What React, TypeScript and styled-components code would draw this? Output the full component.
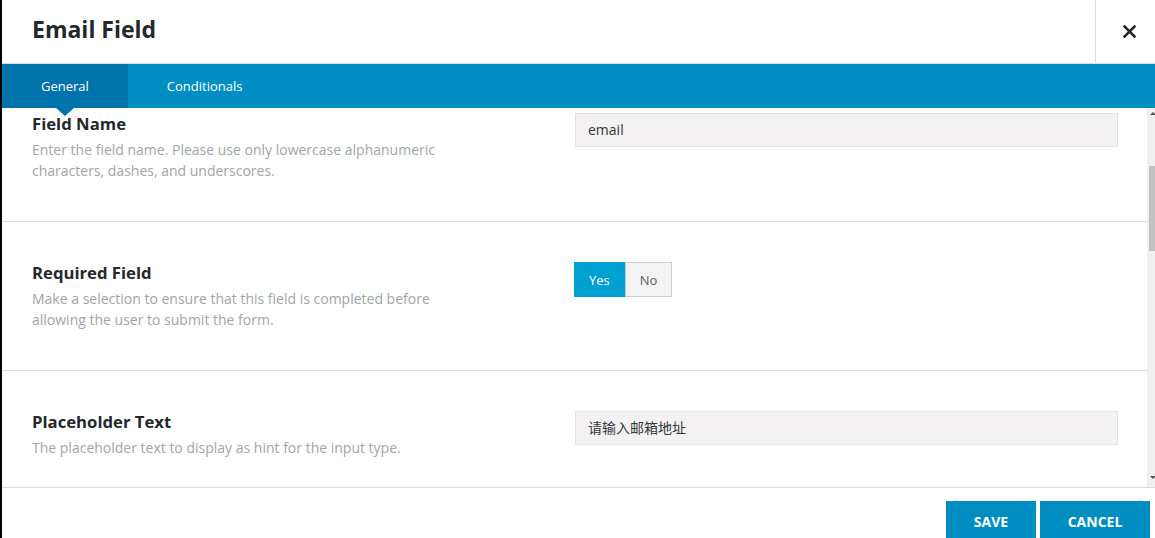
import React from "react";
import styled, { createGlobalStyle } from "styled-components";

const GlobalStyle = createGlobalStyle`
  * { box-sizing: border-box; }
  html, body {
    margin: 0;
    padding: 0;
    height: 100%;
    overflow: hidden;
    background: #000;
  }
  body {
    font-family: "Open Sans", "Noto Sans CJK SC", sans-serif;
    color: #23282d;
  }
  #root { height: 100%; }
`;

const Modal = styled.div`
  margin-left: 2px;
  height: 100vh;
  background: #fff;
  display: flex;
  flex-direction: column;
`;

const Header = styled.header`
  height: 64px;
  flex-shrink: 0;
  display: flex;
  border-bottom: 1px solid #dddddd;
`;

const Title = styled.h1`
  flex: 1;
  margin: 0;
  padding: 0 0 6px 30px;
  display: flex;
  align-items: center;
  font-size: 23px;
  font-weight: 700;
  color: #23282d;
`;

const CloseButton = styled.button`
  width: 60px;
  border: none;
  border-left: 1px solid #dddddd;
  background: #fff;
  padding: 0 0 0 8px;
  display: flex;
  align-items: center;
  justify-content: center;
  cursor: pointer;
`;

const Tabs = styled.nav`
  height: 44px;
  flex-shrink: 0;
  display: flex;
  background: #008ec2;
  position: relative;
  z-index: 2;
`;

const Tab = styled.div<{ $active?: boolean }>`
  position: relative;
  padding: 0 39px;
  display: flex;
  align-items: center;
  font-size: 13px;
  color: #fff;
  background: ${(p) => (p.$active ? "#0073aa" : "transparent")};

  &::after {
    content: "";
    display: ${(p) => (p.$active ? "block" : "none")};
    position: absolute;
    left: 50%;
    bottom: -8px;
    margin-left: -9px;
    border-left: 9px solid transparent;
    border-right: 9px solid transparent;
    border-top: 8px solid #0073aa;
  }
`;

const Body = styled.div`
  flex: 1;
  min-height: 0;
  display: flex;
`;

const ScrollArea = styled.div`
  flex: 1;
  overflow: hidden;
`;

const Row = styled.section`
  display: grid;
  grid-template-columns: 1fr 1fr;
  padding: 40px 29px 40px 30px;
  border-bottom: 1px solid #dfdfdf;
`;

const Info = styled.div``;

const Label = styled.h3`
  margin: 0 0 4px;
  font-size: 16.7px;
  line-height: 22px;
  font-weight: 700;
  color: #23282d;
`;

const Description = styled.p`
  margin: 0;
  max-width: 80%;
  font-size: 14px;
  line-height: 21px;
  color: #a0a5aa;
`;

const TextInput = styled.div`
  height: 34px;
  padding: 0 12px 2px;
  display: flex;
  align-items: center;
  background: #f3f1f1;
  border: 1px solid #e2e2e2;
  font-size: 14px;
  color: #32373c;
`;

const Toggle = styled.div`
  display: flex;
  margin-left: -1px;
`;

const ToggleOption = styled.div<{ $on?: boolean }>`
  height: 35px;
  padding: 0 14px;
  display: flex;
  align-items: center;
  font-size: 13px;
  color: ${(p) => (p.$on ? "#fff" : "#555d66")};
  background: ${(p) => (p.$on ? "#00a0d2" : "#f3f3f3")};
  border: 1px solid ${(p) => (p.$on ? "#00a0d2" : "#cccccc")};
`;

const Scrollbar = styled.div`
  width: 8px;
  flex-shrink: 0;
  display: flex;
  flex-direction: column;
  align-items: flex-end;
  background: #f0f0f0;
  padding: 4px 0 8px;
`;

const Arrow = styled.div<{ $down?: boolean }>`
  align-self: center;
  margin-left: 3px;
  width: 0;
  height: 0;
  border-left: 3px solid transparent;
  border-right: 3px solid transparent;
  ${(p) =>
    p.$down
      ? "border-top: 3px solid #505050; margin-top: auto;"
      : "border-bottom: 3px solid #505050;"}
`;

const Thumb = styled.div`
  width: 6px;
  height: 85px;
  margin-top: 51px;
  background: #c1c1c1;
`;

const Footer = styled.footer`
  height: 51px;
  flex-shrink: 0;
  border-top: 1px solid #dddddd;
  display: flex;
  justify-content: flex-end;
  align-items: flex-start;
  gap: 4px;
  padding: 13px 5px 0 0;
  overflow: hidden;
`;

const ActionButton = styled.button<{ $w: number }>`
  width: ${(p) => p.$w}px;
  height: 40px;
  flex-shrink: 0;
  border: none;
  background: #008ec2;
  color: #fff;
  font-family: "Open Sans", sans-serif;
  font-size: 14px;
  font-weight: 700;
  text-transform: uppercase;
  cursor: pointer;
`;

const fields = [
  {
    label: "Field Name",
    desc: "Enter the field name. Please use only lowercase alphanumeric characters, dashes, and underscores.",
    kind: "text",
    value: "email",
  },
  {
    label: "Required Field",
    desc: "Make a selection to ensure that this field is completed before allowing the user to submit the form.",
    kind: "toggle",
    value: "yes",
  },
  {
    label: "Placeholder Text",
    desc: "The placeholder text to display as hint for the input type.",
    kind: "text",
    value: "请输入邮箱地址",
  },
];

function App() {
  return (
    <>
      <GlobalStyle />
      <Modal>
        <Header>
          <Title>Email Field</Title>
          <CloseButton aria-label="Close">
            <svg width="13" height="13" viewBox="0 0 13 13">
              <path
                d="M1.5 1.5 L11.5 11.5 M11.5 1.5 L1.5 11.5"
                stroke="#23282d"
                strokeWidth="2.6"
                strokeLinecap="square"
              />
            </svg>
          </CloseButton>
        </Header>
        <Tabs>
          <Tab $active>General</Tab>
          <Tab>Conditionals</Tab>
        </Tabs>
        <Body>
          <ScrollArea
            ref={(el) => {
              if (el) el.scrollTop = 35;
            }}
          >
            {fields.map((f) => (
              <Row key={f.label}>
                <Info>
                  <Label>{f.label}</Label>
                  <Description>{f.desc}</Description>
                </Info>
                <div>
                  {f.kind === "toggle" ? (
                    <Toggle>
                      <ToggleOption $on>Yes</ToggleOption>
                      <ToggleOption>No</ToggleOption>
                    </Toggle>
                  ) : (
                    <TextInput>{f.value}</TextInput>
                  )}
                </div>
              </Row>
            ))}
          </ScrollArea>
          <Scrollbar>
            <Arrow />
            <Thumb />
            <Arrow $down />
          </Scrollbar>
        </Body>
        <Footer>
          <ActionButton $w={90}>Save</ActionButton>
          <ActionButton $w={110}>Cancel</ActionButton>
        </Footer>
      </Modal>
    </>
  );
}

export default App;
